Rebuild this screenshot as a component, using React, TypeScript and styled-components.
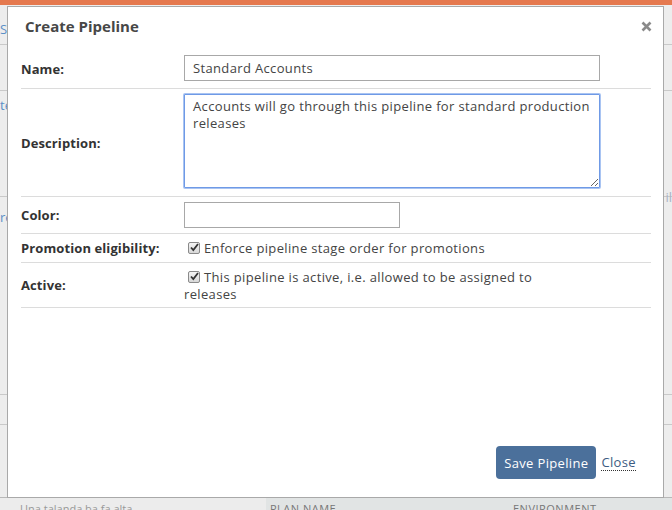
import React from 'react';
import styled, { createGlobalStyle } from 'styled-components';

const GlobalStyle = createGlobalStyle`
  html, body {
    margin: 0;
    padding: 0;
  }
  body {
    font-family: 'Open Sans', 'Liberation Sans', sans-serif;
    background: #ededed;
    color: #333;
  }
`;

const Page = styled.div`
  position: relative;
  width: 672px;
  height: 510px;
  overflow: hidden;
  background: #ededed;
  display: flex;
  flex-direction: column;
`;

const TopBar = styled.div`
  height: 5px;
  background: #e5794f;
  flex: none;
`;

const Backdrop = styled.div`
  flex: 1;
  display: flex;
  flex-direction: column;
`;

const BackRow = styled.div<{ $h: number; $top?: number }>`
  height: ${(p) => p.$h}px;
  box-sizing: border-box;
  padding-top: ${(p) => p.$top ?? 0}px;
  border-bottom: 1px solid #c9c9c9;
  display: flex;
  align-items: flex-start;
  justify-content: space-between;
  font-size: 13px;
  line-height: 17px;
  flex: none;
`;

const BackSpacer = styled.div`
  flex: 1;
`;

const Fragment = styled.span<{ $muted?: boolean; $drop?: number }>`
  color: ${(p) => (p.$muted ? '#aab4c4' : '#5b8fc7')};
  margin-top: ${(p) => p.$drop ?? 0}px;
  white-space: nowrap;
`;

const TableHead = styled.div`
  height: 12px;
  border-top: 1px solid #b8b8b8;
  display: grid;
  grid-template-columns: 266px 1fr;
  font-size: 11px;
  color: #777;
  flex: none;
`;

const HeadLeft = styled.div`
  background: #ececec;
  padding-left: 20px;
  line-height: 22px;
  color: #999;
`;

const HeadRight = styled.div`
  background: #e1e4e4;
  display: grid;
  grid-template-columns: 243px 1fr;
  padding-left: 4px;
  line-height: 22px;
  letter-spacing: 0.5px;
`;

const Modal = styled.div`
  position: absolute;
  left: 7px;
  top: 6px;
  width: 655px;
  height: 490px;
  background: #fff;
  border: 1px solid #a9a9a9;
  display: flex;
  flex-direction: column;
`;

const Header = styled.div`
  height: 42px;
  box-sizing: border-box;
  display: flex;
  align-items: flex-start;
  justify-content: space-between;
  padding: 9px 11px 0 17px;
`;

const Title = styled.h3`
  margin: 0;
  font-size: 15px;
  line-height: 20px;
  font-weight: 700;
  color: #474747;
`;

const CloseX = styled.button`
  border: 0;
  background: none;
  padding: 0;
  margin-top: 4px;
  width: 12px;
  height: 12px;
  display: flex;
  align-items: center;
  justify-content: center;
  cursor: pointer;
`;

const Body = styled.div`
  padding: 0 12px 0 13px;
  flex: 1;
`;

const FormTable = styled.table`
  width: 100%;
  border-collapse: collapse;
`;

const Row = styled.tr`
  border-bottom: 1px solid #dcdcdc;
`;

const Label = styled.td`
  width: 163px;
  padding: 6px 0 5px;
  font-size: 13px;
  line-height: 17px;
  font-weight: 700;
  letter-spacing: 0.1px;
  color: #333;
  vertical-align: middle;
`;

const Field = styled.td<{ $top?: number; $bottom?: number }>`
  padding: ${(p) => p.$top ?? 6}px 0 ${(p) => p.$bottom ?? 5}px;
  font-size: 13px;
  line-height: 17px;
  letter-spacing: 0.35px;
  color: #444;
  vertical-align: middle;
`;

const TextInput = styled.input<{ $w: number }>`
  box-sizing: border-box;
  width: ${(p) => p.$w}px;
  height: 26px;
  border: 1px solid #a8a8a8;
  padding: 0 8px;
  font-family: inherit;
  font-size: 13px;
  letter-spacing: 0.35px;
  color: #444;
  display: block;
  outline: none;
`;

const TextArea = styled.textarea`
  box-sizing: border-box;
  width: 416px;
  height: 94px;
  display: block;
  margin-bottom: 3px;
  border: 1px solid #6f9ae6;
  box-shadow: 0 0 0 1px #a9c4f2;
  border-radius: 1px;
  padding: 3px 8px;
  font-family: inherit;
  font-size: 13px;
  line-height: 17px;
  letter-spacing: 0.35px;
  color: #444;
  outline: none;
`;

const CheckLine = styled.div`
  max-width: 390px;
`;

const Check = styled.span`
  display: inline-block;
  box-sizing: border-box;
  width: 12px;
  height: 12px;
  margin: 0 4px 0 4px;
  vertical-align: -1px;
  border: 1px solid #8a8a8a;
  border-radius: 2px;
  background: linear-gradient(#f4f4f4, #d8d8d8);
  position: relative;
`;

const CheckMark = styled.svg`
  position: absolute;
  left: 0;
  top: -1px;
`;

const Footer = styled.div`
  display: flex;
  justify-content: flex-end;
  align-items: center;
  gap: 5px;
  padding: 0 27px 18px 0;
`;

const SaveButton = styled.button`
  height: 33px;
  padding: 0 8px;
  border: 0;
  border-radius: 4px;
  background: #4b709b;
  color: #fff;
  font-family: inherit;
  font-size: 13px;
  letter-spacing: 0.35px;
  cursor: pointer;
`;

const CloseLink = styled.a`
  font-size: 13px;
  letter-spacing: 0.35px;
  color: #3d5c82;
  text-decoration: none;
  border-bottom: 1px dotted #333;
  line-height: 16px;
  cursor: pointer;
`;

function Checkbox() {
  return (
    <Check>
      <CheckMark width="11" height="11" viewBox="0 0 11 11">
        <path d="M2 5.5 L4.3 8 L9 2" fill="none" stroke="#333" strokeWidth="1.8" />
      </CheckMark>
    </Check>
  );
}

export default function App() {
  return (
    <>
      <GlobalStyle />
      <Page>
        <TopBar />
        <Backdrop>
          <BackRow $h={40} $top={16}>
            <Fragment>Se</Fragment>
            <Fragment />
          </BackRow>
          <BackRow $h={46}>
            <Fragment />
            <Fragment />
          </BackRow>
          <BackRow $h={106} $top={6}>
            <Fragment>te</Fragment>
            <Fragment $muted $drop={92}>il</Fragment>
          </BackRow>
          <BackRow $h={198} $top={12}>
            <Fragment>re</Fragment>
            <Fragment />
          </BackRow>
          <BackRow $h={30}>
            <Fragment />
            <Fragment />
          </BackRow>
          <BackSpacer />
          <TableHead>
            <HeadLeft>Una talanda ba fa alta</HeadLeft>
            <HeadRight>
              <span>PLAN NAME</span>
              <span>ENVIRONMENT</span>
            </HeadRight>
          </TableHead>
        </Backdrop>

        <Modal>
          <Header>
            <Title>Create Pipeline</Title>
            <CloseX aria-label="close">
              <svg width="11" height="11" viewBox="0 0 11 11">
                <path d="M1.5 1.5 L9.5 9.5 M9.5 1.5 L1.5 9.5" stroke="#8a8a8a" strokeWidth="2.6" />
              </svg>
            </CloseX>
          </Header>
          <Body>
            <FormTable>
              <tbody>
                <Row>
                  <Label>Name:</Label>
                  <Field $bottom={7}>
                    <TextInput $w={416} defaultValue="Standard Accounts" />
                  </Field>
                </Row>
                <Row>
                  <Label>Description:</Label>
                  <Field $top={5}>
                    <TextArea defaultValue="Accounts will go through this pipeline for standard production releases" />
                  </Field>
                </Row>
                <Row>
                  <Label>Color:</Label>
                  <Field $top={5}>
                    <TextInput $w={216} defaultValue="" />
                  </Field>
                </Row>
                <Row>
                  <Label>Promotion eligibility:</Label>
                  <Field>
                    <CheckLine>
                      <Checkbox />
                      Enforce pipeline stage order for promotions
                    </CheckLine>
                  </Field>
                </Row>
                <Row>
                  <Label>Active:</Label>
                  <Field $bottom={4}>
                    <CheckLine>
                      <Checkbox />
                      This pipeline is active, i.e. allowed to be assigned to releases
                    </CheckLine>
                  </Field>
                </Row>
              </tbody>
            </FormTable>
          </Body>
          <Footer>
            <SaveButton>Save Pipeline</SaveButton>
            <CloseLink>Close</CloseLink>
          </Footer>
        </Modal>
      </Page>
    </>
  );
}
